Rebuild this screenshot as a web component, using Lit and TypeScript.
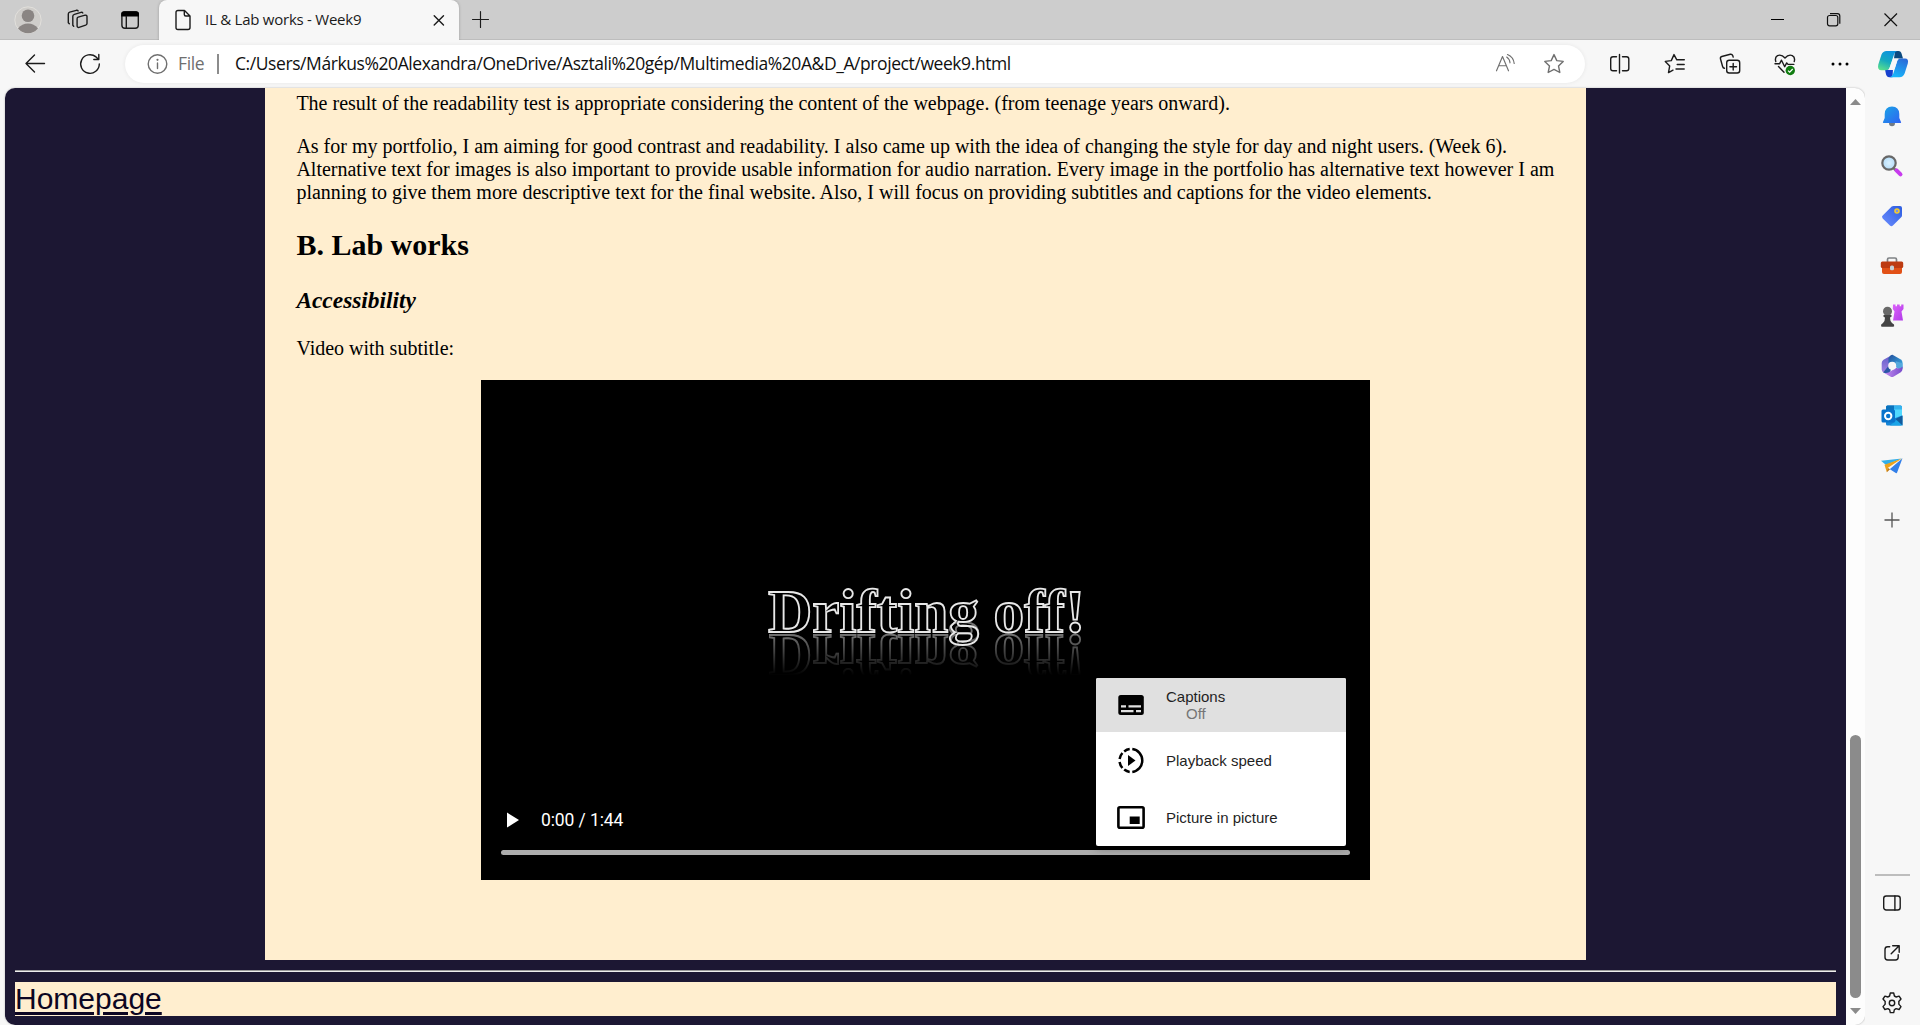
import { LitElement, html, css } from "lit";
import { customElement } from "lit/decorators.js";

const base = css`
  * { box-sizing: border-box; }
  svg { display: block; flex: none; overflow: visible; }
  .ln { fill: none; stroke: #1b1b1b; stroke-width: 1.4; stroke-linecap: round; stroke-linejoin: round; }
  .dim { stroke: #6f6f6f; }
  .thin { stroke-width: 1.15; }
`;

@customElement("tab-strip")
class TabStrip extends LitElement {
  static styles = [base, css`
    :host { display: flex; align-items: center; height: 40px; background: #cdcdcd; padding: 0 21px 0 14px;
      font-family: "Open Sans", "Noto Sans", sans-serif; box-shadow: inset 0 -1px 0 #bdbdbd; }
    .spaces { margin-left: 23px; }
    .actions { margin-left: 29px; }
    .tab { position: relative; display: flex; align-items: center; width: 300px; height: 40px; margin-left: 17px;
      padding: 0 14px 0 15px; background: #f7f7f7; border-radius: 8px 8px 0 0; box-shadow: 0 0 3px rgba(0,0,0,.25); clip-path: inset(0 -4px 0 -4px); }
    .title { margin-left: 13px; flex: 1; font-size: 15px; line-height: 20px; padding-bottom: 2px; letter-spacing: -0.24px; color: #1b1b1b; white-space: nowrap; }
    .add { margin-left: 12px; }
    .win { display: flex; margin-left: auto; gap: 41px; }
  `];
  render() {
    return html`
      <svg width="28" height="28" viewBox="0 0 28 28"><circle cx="14" cy="14" r="13.2" fill="#cfcdca" stroke="#e2e0dc"/><circle cx="14" cy="9.8" r="6.3" fill="#8a8583"/><path d="M4 22.5Q8 17.5 14 17.5T24 22.5Q20 27.2 14 27.2T4 22.5Z" fill="#8a8583"/></svg>
      <svg class="spaces" width="24" height="24" viewBox="0 0 24 24"><g class="ln"><path d="M13.200 9.200l6.900-2q1.600-.4 1.900 1.100v7.300q0 1-1.300 1.500l-6.700 2.300q-1.500.4-1.900-1.300v-7.400q0-1.100 1.100-1.500Z"/><path d="M8.700 18.300l-.9-1V8.300q0-1.500 1.600-2l6.600-1.900q1.300-.3 1.800.6"/><path d="M4.300 15.700l-1-1V6Q3.300 4.600 4.700 4.200l6.600-1.900q1.300-.3 1.800.6"/></g></svg>
      <svg class="actions" width="24" height="24" viewBox="0 0 24 24"><rect class="ln" x="3.900" y="3.900" width="16.400" height="16.400" rx="3"/><path d="M3.200 8.400V6q0-2.800 2.800-2.800h12.200Q21 3.200 21 6v2.400Z" fill="#000"/><path class="ln" d="M8.300 8.500v11.500"/></svg>
      <div class="tab">
        <svg width="18" height="22" viewBox="0 0 18 22"><path class="ln" d="M4 1.500h6.500l5.500 5.500v11.500q0 2-2 2H4q-2 0-2-2v-15q0-2 2-2ZM10.300 1.800v3.700q0 1.500 1.500 1.500h4"/></svg>
        <span class="title">IL &amp; Lab works - Week9</span>
        <svg width="12" height="12" viewBox="0 0 12 12"><path class="ln" d="M1.200 1.700l9.300 9.300M10.500 1.700l-9.300 9.300"/></svg>
      </div>
      <svg class="add" width="20" height="20" viewBox="0 0 20 20"><path class="ln thin" d="M1.500 9.500h16M9.500 1.500v16"/></svg>
      <div class="win">
        <svg width="16" height="16" viewBox="0 0 16 16"><path d="M2 7.500h13" stroke="#000"/></svg>
        <svg width="16" height="16" viewBox="0 0 16 16"><g fill="none" stroke="#111" stroke-width="1.200"><rect x="1.500" y="3.500" width="10.300" height="10.300" rx="2"/><path d="M4 1.700h7.500q2.300 0 2.300 2.300v7.700"/></g></svg>
        <svg width="16" height="16" viewBox="0 0 16 16"><path d="M1.500 1.500l12.500 12.500M14 1.500l-12.500 12.500" stroke="#111" stroke-width="1.200"/></svg>
      </div>`;
  }
}

@customElement("tool-bar")
class ToolBar extends LitElement {
  static styles = [base, css`
    :host { display: flex; align-items: center; height: 48px; background: #f7f7f7; padding: 0 11px 0 23px;
      font-family: "Open Sans", "Noto Sans", sans-serif; font-size: 17.5px; color: #101010; }
    .reload { margin-left: 31px; }
    .pill { display: flex; align-items: center; width: 1460px; height: 38px; margin-left: 23px; padding: 0 19px 0 21px; border-radius: 19px;
      background: #fff; box-shadow: 0 0 4px rgba(0,0,0,.07); }
    .file { margin-left: 8px; padding-bottom: 2px; color: #6f6f6f; width: 27px; letter-spacing: -0.35px; white-space: nowrap; }
    .bar { width: 2px; height: 20px; background: #8c8c8c; margin: 0 16px 0 12px; }
    .url { letter-spacing: -0.42px; padding-bottom: 2px; flex: 1; white-space: nowrap; }
    .star { margin-left: 25px; }
    .set { display: flex; margin-left: 23px; gap: 31px; }
    .copilot { margin-left: auto; }
  `];
  render() {
    return html`
      <svg width="24" height="24" viewBox="0 0 24 24"><path class="ln" d="M21.500 11.500H3M11.500 3L3 11.500l8.500 8.500"/></svg>
      <svg class="reload" width="24" height="24" viewBox="0 0 24 24"><path class="ln" d="M21.300 12a9.300 9.300 0 1 1-3.300-7.100l2.500 2.300M20.800 2.500v5h-5"/></svg>
      <div class="pill">
        <svg width="24" height="24" viewBox="0 0 24 24"><circle class="ln dim" cx="11.500" cy="12" r="9.300"/><path class="ln dim" d="M11.500 11v5.500"/><circle cx="11.500" cy="7.800" r="1.100" fill="#6f6f6f"/></svg>
        <span class="file">File</span><span class="bar"></span>
        <span class="url">C:/Users/Márkus%20Alexandra/OneDrive/Asztali%20gép/Multimedia%20A&amp;D_A/project/week9.html</span>
        <svg width="24" height="24" viewBox="0 0 24 24"><path class="ln dim thin" d="M3.500 18.800L9.500 4.500 15.500 18.800M5.700 13.700h7.600M13.700 5q3 2 3.300 5.800M14.500 2.500q6 2.500 6.700 9"/></svg>
        <svg class="star" width="24" height="24" viewBox="0 0 24 24"><path class="ln dim" d="M12 2.600l2.800 6 6.400.8-4.700 4.500 1.300 6.600-5.800-3.100-5.800 3.100 1.300-6.600L2.800 9.400l6.400-.8Z"/></svg>
      </div>
      <div class="set">
        <svg width="24" height="24" viewBox="0 0 24 24"><path class="ln" d="M8.500 4.700H5q-2.300 0-2.300 2.300v9.500q0 2.300 2.300 2.300h3.500M14.500 4.700h4q2.300 0 2.300 2.300v9.500q0 2.300-2.300 2.300h-4M11.500 2.500v18.500"/></svg>
        <svg width="24" height="24" viewBox="0 0 24 24"><path class="ln" d="M10 18.200l-4.500 2.400 1.200-6.700L2.300 9.400l6-.8L11 2.600l2.800 5.200h7.500M14.200 12.500h7M13 17h8.200"/></svg>
        <svg width="24" height="24" viewBox="0 0 24 24"><rect class="ln" x="8.700" y="8.300" width="13" height="12.700" rx="2.500"/><path class="ln" d="M15.200 11.500v6.500M11.900 14.700h6.600M6.500 16.200q-1.500 0-1.900-1.700L2.500 7q-.5-1.900 1.300-2.500l8.500-2.200q1.800-.3 2.400 1.200l.5 1.600"/></svg>
        <svg width="24" height="24" viewBox="0 0 24 24"><path class="ln" d="M2.800 9.500Q1.500 5.500 4.500 3.600 8.500 2 12 6q3.500-4 7.300-2.400Q22.500 5.500 21.200 9.500M2 11.800h4.500l2-3.600 3.200 6.500 2-3.800 1.300 1.500h5.800M5.500 14.500l5.500 5.800"/><circle cx="17.300" cy="18.500" r="4.700" fill="#107c10"/><path d="M15 18.600l1.700 1.600 3-3.200" fill="none" stroke="#fff" stroke-width="1.200"/></svg>
        <svg width="24" height="24" viewBox="0 0 24 24"><circle cx="5" cy="12" r="1.500"/><circle cx="12" cy="12" r="1.500"/><circle cx="19" cy="12" r="1.500"/></svg>
      </div>
      <svg class="copilot" width="32" height="28" viewBox="0 0 32 28">
        <defs><linearGradient id="a" x1="0.600" y1="0" x2="0.200" y2="1"><stop stop-color="#0d93de"/><stop offset=".5" stop-color="#14a9c0"/><stop offset="1" stop-color="#5be08c"/></linearGradient>
        <linearGradient id="b" x1="0.700" y1="0" x2="0.300" y2="1"><stop stop-color="#2a6bd8"/><stop offset="1" stop-color="#18b8fc"/></linearGradient></defs>
        <path d="M18 1h3.500q2.500 0 3.200 3l1.300 4.500H17Z" fill="#0c4a80"/>
        <path d="M8 19.500h8l-.5 7.700h-3.200q-2.500 0-3.300-3Z" fill="#1741ce"/>
        <path d="M9.500 1H20q-2.200.8-3 3.500l-4.300 13Q11.800 20.300 8.500 20.300H4.500Q0 20.300 1.300 14.500L4.500 4.500Q6 1 9.500 1Z" fill="url(#a)"/>
        <path d="M22.500 27.200H12.800q2.500-.8 3.400-3.500l4-12.500Q21 8.500 24 8.500h4q4 0 2.800 5l-3.200 10Q26.300 27.200 22.500 27.200Z" fill="url(#b)"/>
        <path d="M16 8.500h5.700q-1.200.8-1.700 2.700l-2.300 7.300q-.5 1.500-2 1.500h-5q1.500-.8 2-2.500Z" fill="#f7f7f7"/>
      </svg>`;
  }
}

@customElement("side-bar")
class SideBar extends LitElement {
  static styles = [base, css`
    :host { display: flex; flex-direction: column; width: 55px; padding: 3px 1px 0 0; background: #f7f7f7; }
    .slot { display: flex; align-items: center; justify-content: center; height: 50px; flex: none; }
    .plus { height: 58px; }
    .rule { margin: auto 9px 2px 10px; height: 2px; background: #bdbdbd; flex: none; }
    .last { height: 47px; padding-top: 3px; }
  `];
  render() {
    return html`
      <div class="slot"><svg width="24" height="24" viewBox="0 0 24 24"><defs><linearGradient id="bl" x1="0" y1="0" x2="1" y2="1"><stop stop-color="#1aa5e6"/><stop offset="1" stop-color="#2f62f2"/></linearGradient></defs><path d="M9 19h6q0 3.200-3 3.200T9 19Z" fill="#727b84"/><path d="M12 2.500q7 0 7.300 7.500v4l1.800 4.300q.2.700-.6.700h-17q-.8 0-.6-.7L4.700 14v-4Q5 2.500 12 2.500Z" fill="url(#bl)"/></svg></div>
      <div class="slot"><svg width="24" height="24" viewBox="0 0 24 24"><defs><radialGradient id="gl"><stop stop-color="#d9f1ff"/><stop offset="1" stop-color="#b4dcf8"/></radialGradient></defs><path d="M13.500 14l2.500 2.500" stroke="#777" stroke-width="2.500"/><path d="M16.500 16.300l4 4" stroke="#c83bee" stroke-width="4" stroke-linecap="round"/><circle cx="9" cy="9" r="6.700" fill="url(#gl)" stroke="#686868" stroke-width="2.200"/></svg></div>
      <div class="slot"><svg width="24" height="24" viewBox="0 0 24 24"><defs><linearGradient id="tg" x1="0" y1="1" x2="1" y2="0"><stop stop-color="#6c8dff"/><stop offset="1" stop-color="#2c5de0"/></linearGradient></defs><path d="M13.500 2H20q2 0 2 2v7.500q0 1-.8 1.800l-8.300 8.300q-1.500 1.500-3 0l-7.200-7.200q-1.500-1.500 0-2.800l9-9Q12.500 2 13.500 2Z" fill="url(#tg)"/><circle cx="17" cy="7" r="2" fill="#7792ec" stroke="#f4cb2e" stroke-width="1.600"/></svg></div>
      <div class="slot"><svg width="24" height="24" viewBox="0 0 24 24"><path d="M7.500 8V5.500Q7.500 4 9 4h6q1.500 0 1.500 1.500V8" fill="none" stroke="#7f8285" stroke-width="1.700"/><path d="M2 13h20v5q0 2-2 2H4q-2 0-2-2Z" fill="#e25117"/><rect x=".8" y="7.500" width="22.400" height="6.500" rx="1.500" fill="#bd3b12"/><rect x="10" y="11.500" width="4" height="4.800" rx="1.500" fill="#c5d1d8"/></svg></div>
      <div class="slot"><svg width="24" height="26" viewBox="0 0 24 26"><defs><linearGradient id="rk" x1="0" y1="0" x2="1" y2="1"><stop stop-color="#dc62fa"/><stop offset="1" stop-color="#b13be8"/></linearGradient></defs><path d="M13 1.500h2.500v1.700H17v-1.700h2.700v1.700h1.500v-1.700H23.500v4.500l-2 2.500 1.500 9h-10l1.500-9-1.700-2.500Z" fill="url(#rk)"/><circle cx="7.500" cy="8.300" r="4.500" fill="#696969"/><path d="M3.500 12h8v1.700l-1.500.8q0 4 2 5.500l2 1.500q.7 2.300-.8 2.300H2q-1.500 0-.8-2.300L3 20q2-1.500 2-5.500L3.500 13.700Z" fill="#444"/></svg></div>
      <div class="slot"><svg width="24" height="24" viewBox="0 0 24 24"><defs><linearGradient id="m1" x1="0" y1="0" x2="0" y2="1"><stop stop-color="#625bc9"/><stop offset="1" stop-color="#a889e5"/></linearGradient><linearGradient id="m2" x1="0" y1="0" x2="1" y2="1"><stop stop-color="#244f9c"/><stop offset="1" stop-color="#39b2e8"/></linearGradient><linearGradient id="m3"><stop stop-color="#c48cf1"/><stop offset="1" stop-color="#784ccb"/></linearGradient></defs><path d="M12.500.8L3.500 5.800Q1.700 7 1.700 9v6.500q0 2 1.800 3.100l5 2 2-2V9Z" fill="url(#m1)"/><path d="M3.200 18.400q4.800 1.500 6.800-1l1-3-3-2Z" fill="#2c56a6"/><path d="M12.500.8l8.300 4.700q1.700 1 1.700 3v5.500l-7.500-1.500L8.500 9V4.500Q10 1 12.500.8Z" fill="url(#m2)"/><path d="M15.700 7.200l6.800 2V15q-2 1-4 0l-2.800-2Z" fill="#55a9dd"/><path d="M22.500 12.500V15q0 2-1.700 3.200l-7 4.200q-1.800 1-3.500 0l-6-3.500q4 .5 6-1.500l6-3.700q3 1.800 6.200-1.200Z" fill="url(#m3)"/><circle cx="12.200" cy="11.700" r="4" fill="#f7f7f7"/></svg></div>
      <div class="slot"><svg width="24" height="24" viewBox="0 0 24 24"><rect x="6" y="1.500" width="16" height="20" rx="1.500" fill="#1685d6"/><path d="M6 3q0-1.500 1.500-1.500H14v9H6Z" fill="#0a73bd"/><path d="M14 1.500h6.500Q22 1.500 22 3v7.500h-8Z" fill="#35b3ee"/><path d="M14 5.500h8v6l-8 3Z" fill="#50d9ff"/><path d="M22.500 11.500v10H10Z" fill="#1aa5e8"/><path d="M15.500 15l7 6.500V11.500Z" fill="#125b9d"/><rect x="1.500" y="5.500" width="13.500" height="13" rx="1.500" fill="#0974cc"/><circle cx="8.200" cy="12" r="3.200" fill="none" stroke="#fff" stroke-width="2"/></svg></div>
      <div class="slot"><svg width="24" height="24" viewBox="0 0 24 24"><path d="M1 6.700L22 4.500 6 11Z" fill="#31aeea"/><path d="M22.500 4.300L17 18.800q-.4.800-1.200.3L9.500 15 6.500 18Z" fill="#327fe9"/><path d="M22 4.500L4.500 10.800l2.300 7.400.8-4.300Z" fill="#eda21b"/><path d="M7.600 13.700l-.8 4.500 3.200-3Z" fill="#c37508"/></svg></div>
      <div class="slot plus"><svg width="20" height="20" viewBox="0 0 20 20"><path d="M2.500 10h15M10 2.500v15" stroke="#555" stroke-width="1.300"/></svg></div>
      <div class="rule"></div>
      <div class="slot"><svg width="24" height="24" viewBox="0 0 24 24"><rect class="ln" x="3.700" y="5" width="16.500" height="14" rx="2.500"/><path class="ln" d="M14.900 5v14"/></svg></div>
      <div class="slot"><svg width="24" height="24" viewBox="0 0 24 24"><path class="ln" d="M9.700 5.700H7.700q-2.700 0-2.700 2.700v7.900q0 2.700 2.700 2.700h7.800q2.700 0 2.700-2.700v-2.500M12.700 4.700h6.500v6.500M18.900 5L11.200 12.700"/></svg></div>
      <div class="slot last"><svg width="24" height="24" viewBox="0 0 24 24"><circle class="ln" cx="12" cy="12" r="2.700"/><path class="ln" d="M10.300 2h3.400l.7 3q1 .4 1.700 1l3-.9 1.900 2.900-2.200 2.500q.2 1.300 0 2.600l2.200 2.500-1.900 2.900-3-.9q-.7.600-1.700 1l-.7 3h-3.400l-.7-3q-1-.4-1.700-1l-3 .9L3 15.600l2.200-2.500q-.2-1.300 0-2.600L3 8l1.900-2.900 3 .9q.7-.6 1.700-1Z"/></svg></div>`;
  }
}

@customElement("video-player")
class VideoPlayer extends LitElement {
  static styles = [base, css`
    :host { position: relative; display: flex; flex-direction: column; width: 889px; height: 500px; background: #000; padding: 0 20px 25px; }
    .frame { flex: 1; padding: 200px 0 0 268px; }
    .mirror { width: 316px; height: 70px;
      -webkit-box-reflect: below -33px linear-gradient(to bottom, transparent 12px, rgba(255,255,255,.5) 54px); }
    .caption { font-family: "Liberation Serif", serif; font-weight: 700; font-size: 61.500px; fill: none; stroke: #e8e8e8; stroke-width: 1.8; }
    .controls { display: flex; align-items: center; height: 22px; margin-bottom: 19px; padding-left: 6px; }
    .time { margin-left: 22px; font: 17.5px/22px Roboto, sans-serif; letter-spacing: -0.1px; color: #fff; }
    .track { height: 5px; border-radius: 2.500px; background: #adadad; flex: none; }
    .menu { position: absolute; right: 24px; bottom: 34px; width: 250px; height: 168px; background: #fff; border-radius: 2px;
      box-shadow: 0 2px 10px rgba(0,0,0,.35); font: 15px/17px "Liberation Sans", Arial, sans-serif; color: #1f1f1f; }
    .item { display: flex; align-items: center; height: 57px; padding-left: 20px; }
    .first { height: 54px; background: #e0e0e0; border-radius: 2px 2px 0 0; }
    .label { margin-left: 20px; }
    .off { display: block; padding-left: 20px; color: #757575; }
  `];
  render() {
    return html`
      <div class="frame"><div class="mirror">
        <svg width="316" height="70" viewBox="769 580 316 70">
          <text class="caption" x="768" y="632" textLength="211" lengthAdjust="spacingAndGlyphs">Drifting</text>
          <text class="caption" x="993.500" y="632" textLength="92" lengthAdjust="spacingAndGlyphs">off!</text>
        </svg>
      </div></div>
      <div class="controls">
        <svg width="12" height="16" viewBox="0 0 12 16"><path d="M0 .5v15L12 8Z" fill="#fff"/></svg>
        <span class="time">0:00 / 1:44</span>
      </div>
      <div class="track"></div>
      <div class="menu">
        <div class="item first">
          <svg width="30" height="30" viewBox="0 0 30 30"><rect x="2.300" y="5" width="25.500" height="20" rx="2.500"/><path d="M5 16.300h5M12.500 16.300h12.500M5 21.200h12.500M20 21.200h5" stroke="#e0e0e0" stroke-width="2.300"/></svg>
          <span class="label">Captions<span class="off">Off</span></span>
        </div>
        <div class="item">
          <svg width="30" height="30" viewBox="0 0 30 30"><path d="M16.300 3.100a11.500 11.500 0 0 1 0 22.800M13.700 25.900a11.500 11.500 0 0 1-5.500-2.300M6.400 22A11.500 11.500 0 0 1 3.600 16M3.600 13A11.500 11.500 0 0 1 6.400 7M8.200 5.400a11.500 11.500 0 0 1 5.500-2.300" fill="none" stroke="#000" stroke-width="2.500"/><path d="M12 9v11L19.500 14.500Z"/></svg>
          <span class="label">Playback speed</span>
        </div>
        <div class="item">
          <svg width="30" height="30" viewBox="0 0 30 30"><rect x="2.400" y="4.200" width="25.200" height="20.600" rx="1.500" fill="none" stroke="#000" stroke-width="2.600"/><path d="M13.700 13.500h10v7.500h-10Z"/></svg>
          <span class="label">Picture in picture</span>
        </div>
      </div>`;
  }
}

@customElement("app-root")
class AppRoot extends LitElement {
  static styles = [base, css`
    :host { display: flex; flex-direction: column; width: 1920px; height: 1025px; overflow: hidden; background: #f7f7f7; }
    .body { display: flex; flex: 1; min-height: 0; padding-left: 5px; }
    .view { display: flex; flex: 1; border-radius: 10px; overflow: hidden; background: #fdfdfd; box-shadow: 0 0 2px rgba(0,0,0,.3); }
    .page { flex: 1; background: #1c1733; padding: 0 10px; }
    .card { width: 1321px; height: 872px; margin-left: 250px; padding: 4px 31px 0 31.400px; background: #ffeecf; color: #000;
      font: 20px/23px "Liberation Serif", "Times New Roman", serif; display: flow-root; }
    p { margin: 0 0 20px; }
    h2 { font-size: 30px; line-height: 34px; margin: 24px 0 25px; }
    h3 { font-size: 23.4px; line-height: 27px; font-style: italic; margin: 25px 0 23.400px; }
    video-player { margin-left: 184.600px; }
    .rule { height: 2px; margin: 10px 0; border-top: 1px solid #9a9a9a; border-bottom: 1px solid #eee; }
    .home { height: 34px; background: #ffeecf; color: #0d0622; font: 30px/33px "Liberation Sans", Arial, sans-serif; }
    .link { text-decoration: underline; text-decoration-thickness: 3px; text-underline-offset: 3px; }
    .scroll { width: 19px; display: flex; flex-direction: column; align-items: center; padding: 11px 0; }
    .thumb { width: 11px; height: 263px; border-radius: 6px; background: #8b8b8b; margin: auto 0 10px; }
  `];
  render() {
    return html`
      <tab-strip></tab-strip>
      <tool-bar></tool-bar>
      <div class="body">
        <div class="view">
          <div class="page">
            <div class="card">
              <p>The result of the readability test is appropriate considering the content of the webpage. (from teenage years onward).</p>
              <p>As for my portfolio, I am aiming for good contrast and readability. I also came up with the idea of changing the style for day and night users. (Week 6). Alternative text for images is also important to provide usable information for audio narration. Every image in the portfolio has alternative text however I am planning to give them more descriptive text for the final website. Also, I will focus on providing subtitles and captions for the video elements.</p>
              <h2>B. Lab works</h2>
              <h3>Accessibility</h3>
              <p>Video with subtitle:</p>
              <video-player></video-player>
            </div>
            <div class="rule"></div>
            <div class="home"><span class="link">Homepage</span></div>
          </div>
          <div class="scroll">
            <svg width="11" height="6" viewBox="0 0 11 6"><path d="M0 6L5.500 0 11 6Z" fill="#8b8b8b"/></svg>
            <div class="thumb"></div>
            <svg width="11" height="6" viewBox="0 0 11 6"><path d="M0 0L5.500 6 11 0Z" fill="#8b8b8b"/></svg>
          </div>
        </div>
        <side-bar></side-bar>
      </div>`;
  }
}
